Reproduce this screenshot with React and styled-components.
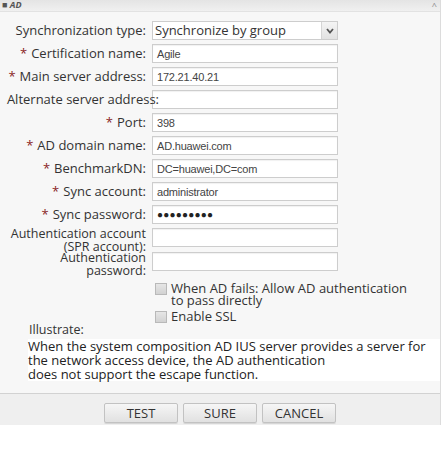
import React from "react";
import styled, { createGlobalStyle } from "styled-components";

const Global = createGlobalStyle`
  html, body { margin: 0; padding: 0; background: #ffffff; }
  body { font-family: "Open Sans", "Noto Sans", sans-serif; color: #2a2a2a; }
`;

const Window = styled.div`
  width: 440px;
  border-right: 1px solid #dcdcdc;
  background: #f7f7f7;
`;

const TitleStrip = styled.div`
  height: 12px;
  display: flex;
  align-items: flex-start;
  justify-content: space-between;
  overflow: hidden;
  background: linear-gradient(#e4e4e4, #f0f0f0);
  border-bottom: 1px solid #e2e2e2;
  box-sizing: border-box;
`;

const TitleText = styled.span`
  font-size: 9px;
  line-height: 10px;
  font-weight: 700;
  color: #555;
  margin: 0 0 0 2px;
  font-style: italic;
`;

const Caret = styled.span`
  font-size: 9px;
  line-height: 9px;
  color: #888;
  margin: 1px 3px 0 0;
`;

const Panel = styled.div`
  padding: 9px 0 0 0;
`;

const FormGrid = styled.div`
  display: grid;
  grid-template-columns: 146px 186px;
  column-gap: 6px;
  row-gap: 4px;
  align-items: center;
`;

const Label = styled.div`
  text-align: right;
  font-size: ${(p) => (p.$multi ? "12.5px" : "13px")};
  line-height: ${(p) => (p.$multi ? "12.5px" : "19px")};
  white-space: nowrap;
  color: #333;
  align-self: ${(p) => (p.$multi ? "start" : "center")};
  margin-right: ${(p) => (p.$spill ? "-13px" : "0")};
  margin-bottom: ${(p) => (p.$tight ? "-5px" : "0")};
  position: relative;
  z-index: 1;
`;

const Star = styled.span`
  color: #8a1f1f;
  margin-right: 4px;
`;

const Field = styled.div`
  height: 19px;
  box-sizing: border-box;
  background: #ffffff;
  border: 1px solid #cdcdcd;
  box-shadow: inset 0 1px 1px rgba(0, 0, 0, 0.06);
  display: flex;
  align-items: center;
  padding-left: 4px;
  font-family: "Liberation Sans", sans-serif;
  font-size: 11px;
  letter-spacing: -0.2px;
  color: #444;
  align-self: ${(p) => (p.$top ? "start" : "center")};
`;

const Dots = styled.span`
  font-size: 10px;
  letter-spacing: 0.2px;
  color: #222;
`;

const Select = styled.div`
  height: 19px;
  box-sizing: border-box;
  background: #ffffff;
  border: 1px solid #cdcdcd;
  display: flex;
  align-items: stretch;
`;

const SelectText = styled.span`
  flex: 1;
  padding-left: 2px;
  font-size: 13px;
  line-height: 17px;
  color: #333;
`;

const SelectArrow = styled.span`
  width: 15px;
  border-left: 1px solid #d5d5d5;
  background: linear-gradient(#f4f4f4, #e2e2e2);
  display: flex;
  align-items: center;
  justify-content: center;
`;

const Options = styled.div`
  margin: 5px 0 0 155px;
  display: flex;
  flex-direction: column;
  gap: 4px;
  width: 255px;
`;

const Option = styled.label`
  display: flex;
  align-items: flex-start;
  gap: 4px;
  font-size: 13px;
  line-height: 12px;
  color: #333;
`;

const Box = styled.span`
  flex: none;
  width: 10px;
  height: 10px;
  margin-top: 1px;
  border: 1px solid #b9b9b9;
  background: linear-gradient(#e6e6e6, #d2d2d2);
`;

const Notes = styled.div`
  margin: 0 0 0 28px;
  padding-bottom: 12px;
`;

const NotesTitle = styled.div`
  font-size: 12.5px;
  line-height: 14px;
  color: #333;
  margin-left: 1px;
`;

const NotesBody = styled.p`
  margin: 2px 0 0 0;
  font-size: 13px;
  line-height: 14px;
  color: #222;
  background: #ffffff;
`;

const ButtonBar = styled.div`
  border-top: 1px solid #d2d2d2;
  background: #efefef;
  padding: 9px 0 2px;
  display: flex;
  justify-content: center;
  align-items: center;
  gap: 5px;
`;

const Button = styled.button`
  width: 74px;
  height: 20px;
  border: 1px solid #c2c2c2;
  border-radius: 2px;
  background: linear-gradient(#f6f6f6, #e1e1e1);
  box-shadow: 0 1px 0 #d6d6d6;
  font-family: "Open Sans", sans-serif;
  font-size: 13px;
  color: #333;
  padding: 0;
  line-height: 18px;
`;

const rows = [
  { label: "Certification name:", req: true, value: "Agile" },
  { label: "Main server address:", req: true, value: "172.21.40.21" },
  { label: "Alternate server address:", spill: true, value: "" },
  { label: "Port:", req: true, value: "398" },
  { label: "AD domain name:", req: true, value: "AD.huawei.com" },
  { label: "BenchmarkDN:", req: true, value: "DC=huawei,DC=com" },
  { label: "Sync account:", req: true, value: "administrator" },
  { label: "Sync password:", req: true, value: "dots" },
];

export default function App() {
  return (
    <>
      <Global />
      <Window>
        <TitleStrip>
          <TitleText>■ AD</TitleText>
          <Caret>^</Caret>
        </TitleStrip>
        <Panel>
          <FormGrid>
            <Label>Synchronization type:</Label>
            <Select>
              <SelectText>Synchronize by group</SelectText>
              <SelectArrow>
                <svg width="8" height="6" viewBox="0 0 8 6">
                  <path d="M1 1 L4 4.5 L7 1" fill="none" stroke="#555" strokeWidth="1.8" />
                </svg>
              </SelectArrow>
            </Select>
            {rows.map((r) => (
              <React.Fragment key={r.label}>
                <Label $spill={r.spill}>
                  {r.req && <Star>*</Star>}
                  {r.label}
                </Label>
                <Field>{r.value === "dots" ? <Dots>●●●●●●●●●</Dots> : r.value}</Field>
              </React.Fragment>
            ))}
            <Label $multi $tight>
              Authentication account
              <br />
              (SPR account):
            </Label>
            <Field $top />
            <Label $multi>
              Authentication
              <br />
              password:
            </Label>
            <Field $top />
          </FormGrid>
          <Options>
            <Option>
              <Box />
              <span>When AD fails: Allow AD authentication to pass directly</span>
            </Option>
            <Option>
              <Box />
              <span>Enable SSL</span>
            </Option>
          </Options>
          <Notes>
            <NotesTitle>Illustrate:</NotesTitle>
            <NotesBody>
              When the system composition AD IUS server provides a server for
              <br />
              the network access device, the AD authentication
              <br />
              does not support the escape function.
            </NotesBody>
          </Notes>
        </Panel>
        <ButtonBar>
          <Button>TEST</Button>
          <Button>SURE</Button>
          <Button>CANCEL</Button>
        </ButtonBar>
      </Window>
    </>
  );
}
